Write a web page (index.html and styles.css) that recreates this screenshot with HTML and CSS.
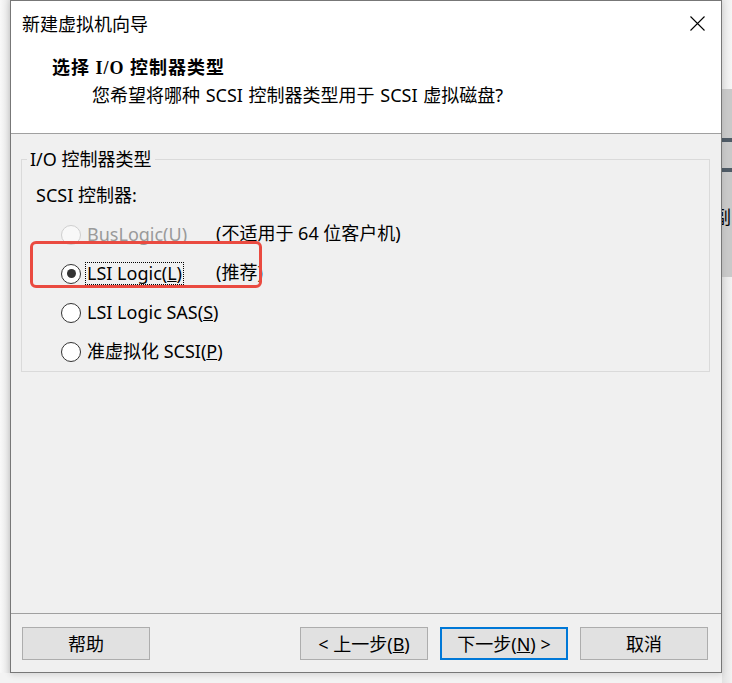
FILE: index.html
```html
<!DOCTYPE html>
<html lang="zh-CN">
<head>
<meta charset="utf-8">
<title>新建虚拟机向导</title>
<link rel="stylesheet" href="styles.css">
</head>
<body>
<div class="desk">
  <div class="shade"></div>
  <div class="window">
    <div class="header">
      <div class="titlebar">
        <span class="title">新建虚拟机向导</span>
        <svg class="close" width="15" height="15" viewBox="0 0 15 15" aria-hidden="true">
          <path d="M0.5 0.5 L14.5 14.5 M14.5 0.5 L0.5 14.5" stroke="#000" stroke-width="1.1" fill="none"/>
        </svg>
      </div>
      <div class="heading">选择 I/O 控制器类型</div>
      <div class="subtitle">您希望将哪种 SCSI 控制器类型用于 SCSI 虚拟磁盘?</div>
    </div>
    <div class="content">
      <fieldset class="group">
        <legend>I/O 控制器类型</legend>
        <div class="caption">SCSI 控制器:</div>
        <div class="options">
          <div class="opt disabled">
            <span class="radio"></span>
            <span class="lbl-cell"><span class="lbl">BusLogic(<u>U</u>)</span></span>
            <span class="note">(不适用于 64 位客户机)</span>
          </div>
          <div class="opt">
            <span class="radio checked"></span>
            <span class="lbl-cell"><span class="lbl focus">LSI Logic(<u>L</u>)</span></span>
            <span class="note">(推荐)</span>
          </div>
          <div class="opt">
            <span class="radio"></span>
            <span class="lbl-cell"><span class="lbl">LSI Logic SAS(<u>S</u>)</span></span>
          </div>
          <div class="opt">
            <span class="radio"></span>
            <span class="lbl-cell"><span class="lbl">准虚拟化 SCSI(<u>P</u>)</span></span>
          </div>
        </div>
      </fieldset>
    </div>
    <div class="footer">
      <button class="btn">帮助</button>
      <div class="nav">
        <button class="btn">&lt; 上一步(<u>B</u>)</button>
        <button class="btn primary">下一步(<u>N</u>) &gt;</button>
        <button class="btn">取消</button>
      </div>
    </div>
    <div class="annot"></div>
  </div>
  <div class="side">
    <div class="side-top"></div>
    <div class="side-panel">
      <div class="bar bar1"></div>
      <div class="bar bar2"></div>
      <div class="side-text">副</div>
    </div>
    <div class="side-bottom"></div>
  </div>
</div>
</body>
</html>
```

FILE: styles.css
```css
html, body {
  margin: 0;
  padding: 0;
}

body {
  width: 732px;
  height: 683px;
  overflow: hidden;
  background: #f3f3f3;
  font-family: "Noto Sans", "Noto Sans CJK SC", sans-serif;
  font-size: 18px;
  color: #000;
}

.desk {
  display: flex;
  align-items: flex-start;
}

.shade {
  width: 10px;
  height: 673px;
  background: linear-gradient(to right, #f9f9f9, #ececec 60%, #dedede);
}

.window {
  position: relative;
  width: 712px;
  height: 673px;
  box-sizing: border-box;
  border: 1px solid #777;
  background: #f0f0f0;
  display: flex;
  flex-direction: column;
  box-shadow: 0 2px 6px rgba(0, 0, 0, 0.12);
}

/* header */
.header {
  height: 133px;
  box-sizing: border-box;
  background: #fff;
  border-bottom: 1px solid #a0a0a0;
  padding-top: 10px;
}

.titlebar {
  display: flex;
  align-items: center;
  justify-content: space-between;
  height: 24px;
  padding-left: 11px;
  padding-right: 16px;
}

.title {
  font-family: "Noto Sans CJK SC", sans-serif;
  font-size: 18px;
  line-height: 24px;
}

.close {
  display: block;
}

.heading {
  margin-top: 21px;
  padding-left: 41px;
  line-height: 24px;
  font-weight: bold;
  font-family: "Liberation Serif", "Noto Sans CJK SC", serif;
  letter-spacing: 1px;
}

.subtitle {
  margin-top: 3px;
  padding-left: 81px;
  line-height: 24px;
  word-spacing: 1px;
}

/* content */
.content {
  flex: 1;
  padding-top: 14px;
}

.group {
  margin: 0 11px 0 10px;
  padding: 0;
  border: 1px solid #dadada;
  min-width: 0;
}

.group legend {
  margin-left: 5px;
  padding: 0 3px;
  line-height: 22px;
}

.caption {
  padding-left: 14px;
  margin-top: 14px;
  line-height: 22px;
}

.options {
  margin-top: 9px;
  padding-left: 39px;
}

.opt {
  display: flex;
  align-items: center;
  height: 39px;
}

.radio {
  width: 20px;
  height: 20px;
  box-sizing: border-box;
  border: 1px solid #333;
  border-radius: 50%;
  background: #fff;
  margin-right: 4px;
  display: flex;
  align-items: center;
  justify-content: center;
  flex: none;
}

.radio.checked::after {
  content: "";
  width: 9px;
  height: 9px;
  border-radius: 50%;
  background: #333;
}

.lbl-cell {
  width: 131px;
  flex: none;
  display: flex;
}

.lbl {
  white-space: nowrap;
  line-height: 21px;
  padding: 0 1px;
  border: 1px solid transparent;
}

.lbl.focus {
  border: 1px dotted #000;
}

.note {
  white-space: nowrap;
  line-height: 21px;
  margin-top: -2px;
}

.disabled .radio {
  border-color: #cfcfcf;
  background: #f8f8f8;
}

.disabled .lbl {
  color: #9a9a9a;
}

/* footer */
.footer {
  border-top: 1px solid #a0a0a0;
  display: flex;
  align-items: flex-start;
  padding: 13px 13px 0 11px;
  box-sizing: border-box;
  height: 59px;
}

.nav {
  margin-left: auto;
  display: flex;
  gap: 12px;
}

.btn {
  width: 128px;
  height: 33px;
  box-sizing: border-box;
  border: 1px solid #adadad;
  background: #e1e1e1;
  font-family: "Noto Sans", "Noto Sans CJK SC", sans-serif;
  font-size: 18px;
  color: #000;
  padding: 0;
  line-height: 24px;
}

.btn.primary {
  border: 2px solid #0078d7;
}

/* annotation overlay */
.annot {
  position: absolute;
  left: 19px;
  top: 240px;
  width: 232px;
  height: 47px;
  box-sizing: border-box;
  border: 3px solid #ea4a40;
  border-radius: 6px;
}

/* right side strip (another window behind) */
.side {
  width: 10px;
  height: 683px;
  display: flex;
  flex-direction: column;
  overflow: hidden;
}

.side-top {
  height: 89px;
  background: linear-gradient(to right, #e6e6e6, #f6f6f6);
}

.side-panel {
  height: 188px;
  background: #c9c9c9;
  display: flex;
  flex-direction: column;
}

.bar {
  height: 4px;
  background: #4f5b66;
}

.bar1 {
  margin-top: 49px;
}

.bar2 {
  margin-top: 26px;
}

.side-text {
  margin-top: 34px;
  margin-left: -9px;
  font-family: "Noto Sans CJK SC", sans-serif;
  font-size: 18px;
  line-height: 20px;
  white-space: nowrap;
}

.side-bottom {
  flex: 1;
  background: linear-gradient(to right, #e2e2e2, #f2f2f2);
}
```
